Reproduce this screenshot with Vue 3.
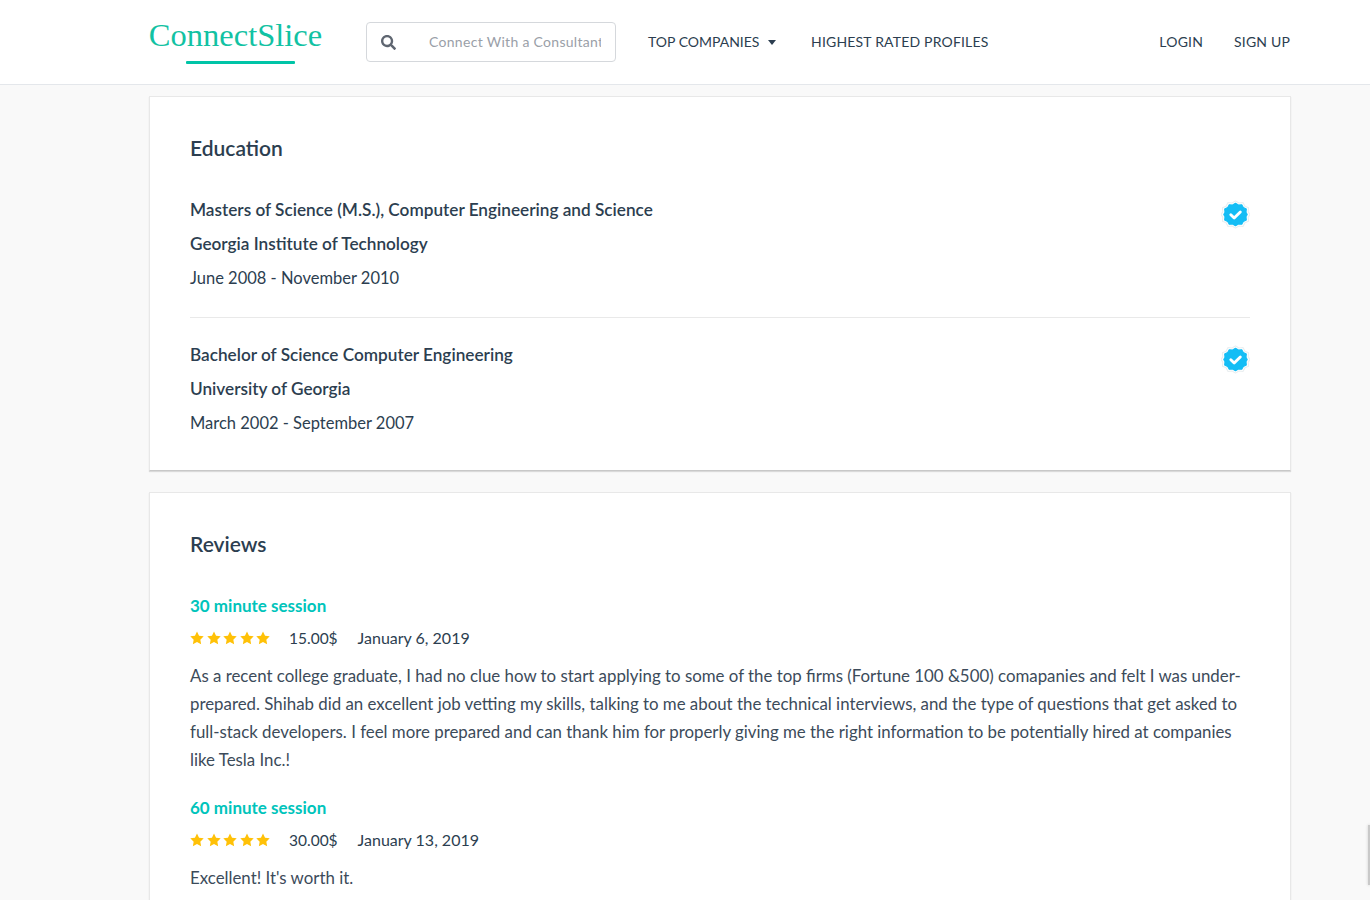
<script setup>
const education = [
  {
    degree: 'Masters of Science (M.S.), Computer Engineering and Science',
    school: 'Georgia Institute of Technology',
    dates: 'June 2008 - November 2010'
  },
  {
    degree: 'Bachelor of Science Computer Engineering',
    school: 'University of Georgia',
    dates: 'March 2002 - September 2007'
  }
]

const reviews = [
  {
    title: '30 minute session',
    price: '15.00$',
    date: 'January 6, 2019',
    text: 'As a recent college graduate, I had no clue how to start applying to some of the top firms (Fortune 100 &500) comapanies and felt I was under-prepared. Shihab did an excellent job vetting my skills, talking to me about the technical interviews, and the type of questions that get asked to full-stack developers. I feel more prepared and can thank him for properly giving me the right information to be potentially hired at companies like Tesla Inc.!'
  },
  {
    title: '60 minute session',
    price: '30.00$',
    date: 'January 13, 2019',
    text: "Excellent! It's worth it."
  }
]
</script>

<template>
  <div class="page">
    <header class="navbar">
      <div class="logo">
        <span class="logo-text">ConnectSlice</span>
        <span class="logo-bar"></span>
      </div>
      <div class="search">
        <svg class="search-icon" viewBox="0 0 512 512" width="15" height="15">
          <path fill="#5f6671" d="M505 442.700L405.300 343c-4.500-4.500-10.600-7-17-7H372c27.600-35.300 44-79.700 44-128C416 93.100 322.900 0 208 0S0 93.100 0 208s93.100 208 208 208c48.300 0 92.700-16.400 128-44v16.300c0 6.400 2.500 12.500 7 17l99.700 99.700c9.400 9.400 24.600 9.400 33.900 0l28.300-28.300c9.400-9.400 9.400-24.600.1-34zM208 336c-70.700 0-128-57.200-128-128 0-70.700 57.200-128 128-128 70.700 0 128 57.200 128 128 0 70.700-57.200 128-128 128z"/>
        </svg>
        <input class="search-input" type="text" placeholder="Connect With a Consultant" />
      </div>
      <nav class="nav-links">
        <a class="nav-link">TOP COMPANIES <span class="caret"></span></a>
        <a class="nav-link wide">HIGHEST RATED PROFILES</a>
      </nav>
      <nav class="nav-right">
        <a class="nav-link wide">LOGIN</a>
        <a class="nav-link wide">SIGN UP</a>
      </nav>
    </header>

    <main class="content">
      <section class="card education">
        <h2>Education</h2>
        <div v-for="(item, i) in education" :key="i" class="edu-item">
          <div>
            <p class="strong">{{ item.degree }}</p>
            <p class="strong">{{ item.school }}</p>
            <p class="plain">{{ item.dates }}</p>
          </div>
          <svg class="verified" viewBox="0 0 26 26" width="29" height="29">
            <path fill="#fff" stroke="#e9eef0" stroke-width="1" stroke-linejoin="round" d="M13 .8l3.100 1.900 3.600-.4 1.700 3.200 3.300 1.500-.3 3.600L26 13l-1.600 2.400.3 3.600-3.300 1.500-1.700 3.200-3.600-.4L13 25.200l-3.100-1.900-3.600.4-1.700-3.200-3.300-1.500.3-3.600L0 13l1.600-2.400L1.300 7l3.300-1.500 1.700-3.200 3.600.4z"/>
            <path fill="#14bdf5" stroke="#14bdf5" stroke-width="1" stroke-linejoin="round" d="M13 3l2.600 1.500 3-.3 1.400 2.600 2.700 1.300-.3 3L23.500 13l-1.100 1.900.3 3-2.700 1.300-1.400 2.600-3-.3L13 23l-2.600-1.500-3 .3-1.400-2.600-2.700-1.300.3-3L2.500 13l1.100-1.900-.3-3 2.700-1.300 1.400-2.600 3 .3z"/>
            <path fill="none" stroke="#fff" stroke-width="2.600" stroke-linecap="round" stroke-linejoin="round" d="M8.800 13.200l3 2.900 5.500-5.400"/>
          </svg>
        </div>
      </section>

      <section class="card reviews">
        <h2>Reviews</h2>
        <div v-for="(review, i) in reviews" :key="i" class="review">
          <h3>{{ review.title }}</h3>
          <div class="meta">
            <span class="stars">
              <svg v-for="n in 5" :key="n" viewBox="0 0 24 24" width="14" height="14">
                <path fill="#ffc107" d="M12 .8l3.500 7.300 8 1.100-5.800 5.600 1.400 8L12 19l-7.100 3.800 1.400-8L.5 9.200l8-1.100z"/>
              </svg>
            </span>
            <span class="price">{{ review.price }}</span>
            <span class="date">{{ review.date }}</span>
          </div>
          <p class="review-text">{{ review.text }}</p>
        </div>
      </section>
    </main>

    <div class="edge-shadow"></div>
  </div>
</template>

<style>
html,
body {
  margin: 0;
  overflow: hidden;
  background: #f9f9f9;
}
</style>

<style scoped>
.page {
  position: relative;
  height: 900px;
  overflow: hidden;
  background: #f9f9f9;
  color: #2c3e50;
  font-family: Lato, "Open Sans", sans-serif;
  font-size: 17.2px;
}

.navbar {
  display: flex;
  align-items: center;
  height: 84px;
  padding: 0 80px 0 149px;
  background: #fff;
  border-bottom: 1px solid #e4e7eb;
}

.logo {
  display: flex;
  flex-direction: column;
  align-items: center;
  width: 173px;
  margin-right: 44px;
}

.logo-text {
  font-family: "Liberation Serif", serif;
  font-size: 32.500px;
  line-height: 31px;
  color: #12c2a3;
  white-space: nowrap;
}

.logo-bar {
  width: 109px;
  height: 3px;
  margin-top: 10px;
  margin-left: 10px;
  background: #00c4a7;
  border-radius: 1px;
}

.search {
  display: flex;
  align-items: center;
  box-sizing: border-box;
  width: 250px;
  height: 40px;
  padding: 0 14px;
  border: 1px solid #d5d8dc;
  border-radius: 4px;
  margin-right: 32px;
}

.search-icon {
  flex: none;
  margin-right: 33px;
}

.search-input {
  flex: 1;
  min-width: 0;
  padding: 0 0 2px;
  border: 0;
  outline: 0;
  background: transparent;
  font-family: inherit;
  font-size: 14px;
  letter-spacing: .3px;
}

.search-input::placeholder {
  color: #9aa0a8;
  opacity: 1;
}

.nav-links {
  display: flex;
  gap: 35px;
  margin-top: -2px;
}

.nav-right {
  display: flex;
  gap: 31px;
  margin-left: auto;
  margin-top: -2px;
}

.nav-link {
  font-size: 14px;
  color: #2c3e50;
  white-space: nowrap;
}

.wide {
  letter-spacing: .18px;
}

.caret {
  display: inline-block;
  margin-left: 5px;
  vertical-align: 2px;
  border-top: 5px solid #2c3e50;
  border-left: 4.500px solid transparent;
  border-right: 4.500px solid transparent;
}

.content {
  display: flex;
  flex-direction: column;
  gap: 21px;
  width: 1142px;
  margin: 11px 0 0 149px;
}

.card {
  box-sizing: border-box;
  padding: 39px 40px 30px;
  background: #fff;
  border: 1px solid #e8e8e8;
  border-bottom-color: #c8c8c8;
  box-shadow: 0 1px 1px rgba(0, 0, 0, .12);
}

h2 {
  margin: 0;
  font-size: 21px;
  font-weight: 600;
  line-height: 24px;
  color: #2c3e50;
}

.edu-item {
  display: flex;
  justify-content: space-between;
  padding-top: 33px;
  padding-bottom: 22px;
}

.edu-item + .edu-item {
  border-top: 1px solid #e9e9e9;
  padding-top: 20px;
  padding-bottom: 0;
}

.edu-item p {
  margin: 0;
  line-height: 34px;
}

.strong {
  font-weight: 600;
}

.edu-item .plain {
  font-size: 16.500px;
}

.verified {
  margin-top: 7px;
}

.reviews h2 {
  margin-bottom: 33px;
}

.review {
  margin-bottom: 17px;
}

h3 {
  margin: 0;
  font-size: 17px;
  font-weight: 700;
  line-height: 34px;
  color: #00c4bb;
}

.meta {
  display: flex;
  align-items: center;
  height: 30px;
}

.stars {
  display: flex;
  gap: 2.500px;
  margin-right: 19px;
}

.price {
  font-size: 15.500px;
  margin-right: 20px;
}

.date {
  font-size: 16px;
  margin-top: -1px;
}

.review-text {
  margin: 9px 0 0;
  line-height: 28px;
  font-size: 16.850px;
  color: #3c4b5a;
}

.edge-shadow {
  position: absolute;
  top: 825px;
  right: 0;
  width: 2px;
  height: 60px;
  background: #c9c9c9;
  box-shadow: 0 0 3px #c9c9c9;
}
</style>
